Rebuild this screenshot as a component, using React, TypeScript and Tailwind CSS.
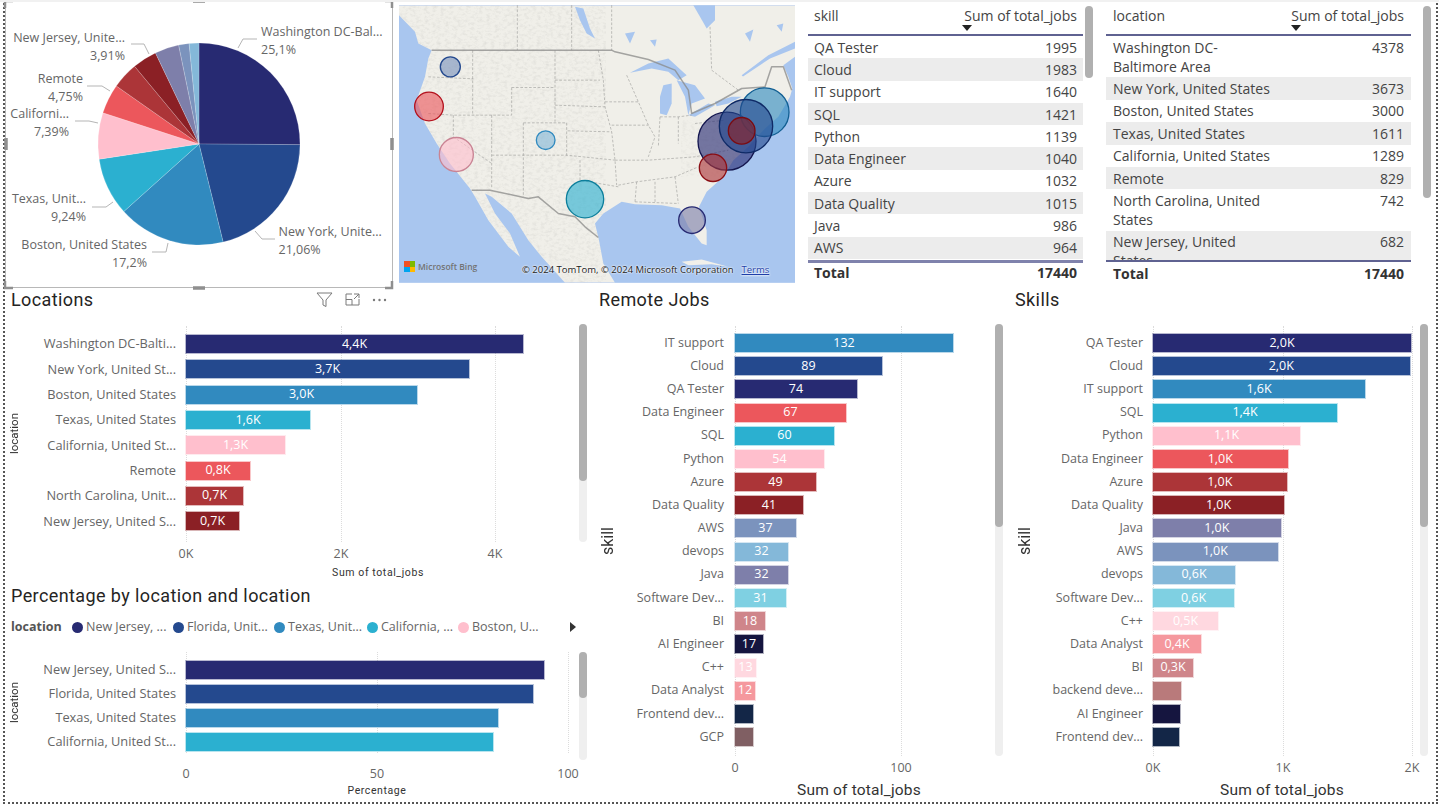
import type { ReactNode } from "react";

const C = {
  navy: "#272a72",
  blue: "#24498e",
  mid: "#318abf",
  teal: "#2bb0d0",
  pink: "#ffbfcd",
  coral: "#ec575c",
  red: "#ac3538",
  dark: "#8b2025",
  purple: "#7e7faa",
  steel: "#7b93bd",
  light: "#84b8d9",
  sky: "#7fd0e2",
  rose: "#cf858a",
  ink: "#15153f",
  blush: "#ffd8e0",
  salmon: "#f5989e",
  deep: "#132647",
  gcp: "#805f63",
  backend: "#b97a7b",
};

type Row = { label: string; value: number; color: string; text?: string };

const locationRows: Row[] = [
  { label: "Washington DC-Balti...", value: 337, color: C.navy, text: "4,4K" },
  { label: "New York, United St...", value: 283, color: C.blue, text: "3,7K" },
  { label: "Boston, United States", value: 231, color: C.mid, text: "3,0K" },
  { label: "Texas, United States", value: 124, color: C.teal, text: "1,6K" },
  { label: "California, United St...", value: 99, color: C.pink, text: "1,3K" },
  { label: "Remote", value: 64, color: C.coral, text: "0,8K" },
  { label: "North Carolina, Unit...", value: 57, color: C.red, text: "0,7K" },
  { label: "New Jersey, United S...", value: 53, color: C.dark, text: "0,7K" },
];

const percentRows: Row[] = [
  { label: "New Jersey, United S...", value: 358, color: C.navy },
  { label: "Florida, United States", value: 347, color: C.blue },
  { label: "Texas, United States", value: 312, color: C.mid },
  { label: "California, United St...", value: 307, color: C.teal },
];

const remoteRows: Row[] = [
  { label: "IT support", value: 218, color: C.mid, text: "132" },
  { label: "Cloud", value: 147, color: C.blue, text: "89" },
  { label: "QA Tester", value: 122, color: C.navy, text: "74" },
  { label: "Data Engineer", value: 111, color: C.coral, text: "67" },
  { label: "SQL", value: 99, color: C.teal, text: "60" },
  { label: "Python", value: 89, color: C.pink, text: "54" },
  { label: "Azure", value: 81, color: C.red, text: "49" },
  { label: "Data Quality", value: 68, color: C.dark, text: "41" },
  { label: "AWS", value: 61, color: C.steel, text: "37" },
  { label: "devops", value: 53, color: C.light, text: "32" },
  { label: "Java", value: 53, color: C.purple, text: "32" },
  { label: "Software Dev...", value: 51, color: C.sky, text: "31" },
  { label: "BI", value: 30, color: C.rose, text: "18" },
  { label: "AI Engineer", value: 28, color: C.ink, text: "17" },
  { label: "C++", value: 21, color: C.blush, text: "13" },
  { label: "Data Analyst", value: 20, color: C.salmon, text: "12" },
  { label: "Frontend dev...", value: 18, color: C.deep },
  { label: "GCP", value: 18, color: C.gcp },
];

const skillRows: Row[] = [
  { label: "QA Tester", value: 258, color: C.navy, text: "2,0K" },
  { label: "Cloud", value: 256.5, color: C.blue, text: "2,0K" },
  { label: "IT support", value: 212, color: C.mid, text: "1,6K" },
  { label: "SQL", value: 184, color: C.teal, text: "1,4K" },
  { label: "Python", value: 147, color: C.pink, text: "1,1K" },
  { label: "Data Engineer", value: 134.5, color: C.coral, text: "1,0K" },
  { label: "Azure", value: 133.5, color: C.red, text: "1,0K" },
  { label: "Data Quality", value: 131, color: C.dark, text: "1,0K" },
  { label: "Java", value: 127.5, color: C.purple, text: "1,0K" },
  { label: "AWS", value: 124.5, color: C.steel, text: "1,0K" },
  { label: "devops", value: 82, color: C.light, text: "0,6K" },
  { label: "Software Dev...", value: 81, color: C.sky, text: "0,6K" },
  { label: "C++", value: 65, color: C.blush, text: "0,5K" },
  { label: "Data Analyst", value: 48, color: C.salmon, text: "0,4K" },
  { label: "BI", value: 40, color: C.rose, text: "0,3K" },
  { label: "backend deve...", value: 28, color: C.backend },
  { label: "AI Engineer", value: 27, color: C.ink },
  { label: "Frontend dev...", value: 25.5, color: C.deep },
];

const skillTable = [
  ["QA Tester", "1995"],
  ["Cloud", "1983"],
  ["IT support", "1640"],
  ["SQL", "1421"],
  ["Python", "1139"],
  ["Data Engineer", "1040"],
  ["Azure", "1032"],
  ["Data Quality", "1015"],
  ["Java", "986"],
  ["AWS", "964"],
];

const locationTable = [
  ["Washington DC-Baltimore Area", "4378"],
  ["New York, United States", "3673"],
  ["Boston, United States", "3000"],
  ["Texas, United States", "1611"],
  ["California, United States", "1289"],
  ["Remote", "829"],
  ["North Carolina, United States", "742"],
  ["New Jersey, United States", "682"],
];

const pieSlices = [
  [25.1, C.navy],
  [21.06, C.blue],
  [17.2, C.mid],
  [9.24, C.teal],
  [7.39, C.pink],
  [4.75, C.coral],
  [4.25, C.red],
  [3.91, C.dark],
  [3.87, C.purple],
  [1.67, C.steel],
  [1.56, C.light],
] as const;

const pieLabels = [
  { x: 261, y: 36, anchor: "start", name: "Washington DC-Bal...", pct: "25,1%", line: "238,48 243,39 257,39" },
  { x: 278.5, y: 236, anchor: "start", name: "New York, Unite...", pct: "21,06%", line: "255,231 262,239 275,239" },
  { x: 147, y: 249, anchor: "end", name: "Boston, United States", pct: "17,2%", line: "168,243 166,252 152,252" },
  { x: 86, y: 203, anchor: "end", name: "Texas, Unit...", pct: "9,24%", line: "113,202 106,207 92,207" },
  { x: 69, y: 118, anchor: "end", name: "Californi...", pct: "7,39%", line: "98,123 89,121 75,121" },
  { x: 83, y: 83, anchor: "end", name: "Remote", pct: "4,75%", line: "110,91 102,86 87,86" },
  { x: 125, y: 42, anchor: "end", name: "New Jersey, Unite...", pct: "3,91%", line: "149,54 144,44 131,44" },
];

function slicePath(start: number, pct: number) {
  const cx = 199;
  const cy = 144;
  const r = 101;
  const a0 = (start / 100) * Math.PI * 2;
  const a1 = ((start + pct) / 100) * Math.PI * 2;
  const large = pct > 50 ? 1 : 0;
  return `M${cx} ${cy}L${cx + r * Math.sin(a0)} ${cy - r * Math.cos(a0)}A${r} ${r} 0 ${large} 1 ${cx + r * Math.sin(a1)} ${cy - r * Math.cos(a1)}Z`;
}

function PieCard() {
  let acc = 0;
  return (
    <div className="w-[388px] h-[288px] border border-[#b8b8b8] border-t-0 shrink-0">
      <svg viewBox="6 0 386 287" className="w-[386px] h-[287px] overflow-visible block">
        {pieSlices.map(([pct, color]) => {
          const d = slicePath(acc, pct);
          acc += pct;
          return <path key={color} d={d} fill={color} stroke="#ffffff" strokeOpacity="0.35" strokeWidth="0.5" />;
        })}
        {pieLabels.map((l) => (
          <g key={l.name}>
            <polyline points={l.line} fill="none" stroke="#b5b5b5" strokeWidth="1" />
            <text x={l.x} y={l.y} textAnchor={l.anchor as "start" | "end"} fontSize="12.5" fill="#666666">
              {l.name}
            </text>
            <text x={l.x} y={l.y + 18} textAnchor={l.anchor as "start" | "end"} fontSize="12.5" fill="#666666">
              {l.pct}
            </text>
          </g>
        ))}
        {/* selection handles */}
        <g fill="none" stroke="#8f8f8f" strokeWidth="2.5">
          <path d="M5 8V1H13M385 1H392V8M5 281V288H13M385 288H392V281" />
          <path d="M193 1H205M193 288H205M6 138V150M392 138V150" strokeWidth="3.5" />
        </g>
      </svg>
    </div>
  );
}

function UsMap() {
  const bubbles = [
    [166, 200, 30, C.steel, C.blue],
    [102, 319, 43, C.coral, "#b3101c"],
    [184, 463, 51, C.pink, "#c98494"],
    [452, 420, 28, C.light, C.mid],
    [570, 597, 56, C.teal, "#0d7f9c"],
    [891, 660, 40, C.purple, C.navy],
    [996, 423, 87, C.navy, "#14164f"],
    [1109, 336, 73, C.mid, "#125f93"],
    [1053, 378, 80, C.blue, "#0f2a66"],
    [954, 503, 41, C.red, "#8b0e14"],
    [1040, 392, 40, C.dark, "#7a0c12"],
  ] as const;
  const borders = [
    "M233 150V340",
    "M100 230L235 236",
    "M100 340L175 345H350",
    "M175 345V410L290 490",
    "M290 345V565",
    "M385 368V590",
    "M350 262H480M350 262V345",
    "M385 368H515V470",
    "M290 465H515L660 480",
    "M480 150V365",
    "M480 240H615M480 315L630 320M518 392L650 395",
    "M610 150L625 240L630 320L650 395L660 480L665 555",
    "M555 480V540L670 560",
    "M630 305H730M650 375H760",
    "M695 225L730 305L760 375L780 410L760 470",
    "M660 480H760L900 470L1000 450",
    "M725 545L720 605M780 545V605M840 530L850 610",
    "M720 605L850 610",
    "M670 555L725 545L840 530L910 500",
    "M850 350V430M795 350L790 440M795 350H850L890 345M900 370L990 360",
    "M367 15V150M530 15V150M650 15V150M945 80L950 210L1030 270",
  ];
  return (
    <div className="relative w-[396px] h-[278px] ml-[6px] mt-[5px] shrink-0 overflow-hidden">
      <svg viewBox="12 15 1188 833" className="w-full h-full block">
        <defs>
          <filter id="terrain" x="0" y="0" width="100%" height="100%">
            <feTurbulence type="fractalNoise" baseFrequency="0.08 0.12" numOctaves="3" seed="4" />
            <feColorMatrix values="0 0 0 0 0.55 0 0 0 0 0.55 0 0 0 0 0.52 0 0 0 1.6 -0.72" />
          </filter>
          <clipPath id="land">
            <path d="M12 15H1200V170L1165 195L1180 230L1192 265L1185 290L1150 350L1110 385L1060 440L1015 480L985 530L935 575L912 620L935 690L935 735L920 730L880 680L855 625L800 615L720 612L680 605L625 640L600 670L612 720L625 790L660 848H510L440 770L400 720L350 640L290 590L270 580L300 640L345 700L375 770L340 740L280 660L240 590L225 565L165 490L125 430L90 370L65 300L90 230L100 175L110 150L70 130L60 95L12 45Z" />
          </clipPath>
        </defs>
        <rect x="12" y="15" width="1188" height="833" fill="#a9c6ef" />
        <g clipPath="url(#land)">
          <rect x="12" y="15" width="1188" height="833" fill="#f0efe9" />
          <rect x="12" y="15" width="620" height="833" filter="url(#terrain)" opacity="0.45" />
          <rect x="860" y="360" width="170" height="170" filter="url(#terrain)" opacity="0.3" />
        </g>
        <path d="M860 785L920 778L1000 800L950 792L880 795Z" fill="#f1f0ea" />
        <g fill="#a9c6ef">
          <path d="M705 218L760 190L820 175L875 225L850 240L820 215L770 205Z" />
          <path d="M805 255L830 250L830 310L815 345L795 340L795 290Z" />
          <path d="M845 240L900 255L930 295L890 310L880 345L870 290Z" />
          <path d="M880 345L940 310L960 315L900 350Z" />
          <path d="M960 305L1010 290L1040 290L1000 310L965 318Z" />
          <path d="M540 20L565 25L585 85L600 115L575 100L555 60Z" />
          <path d="M895 15H960V60L935 85L915 50Z" />
          <path d="M690 100L720 95L705 130ZM765 120L785 118L780 140Z" />
          <path d="M1050 100L1075 88L1065 125ZM1145 75L1165 70L1160 95Z" />
          <path d="M1200 125L1120 165L1040 225L1044 229L1125 175L1200 145Z" />
        </g>
        <g fill="none" stroke="#a3a3a0" strokeWidth="2" strokeDasharray="8 5">
          {borders.map((d) => (
            <path key={d} d={d} />
          ))}
        </g>
        <g fill="none" stroke="#8a8a88" strokeWidth="4.5" strokeOpacity="0.75" strokeLinejoin="round">
          <path d="M110 150H650L660 155L760 178L840 210L880 270L890 340L960 310L1040 265L1110 260L1130 200L1165 200L1190 270" />
          <path d="M230 570H285L400 595L430 590L490 640L540 650L570 680L610 712" />
        </g>
        {bubbles.map(([cx, cy, r, fill, stroke]) => (
          <circle key={`${cx}-${cy}`} cx={cx} cy={cy} r={r} fill={fill} fillOpacity="0.62" stroke={stroke} strokeWidth="4" />
        ))}
      </svg>
      <div className="absolute left-[5px] top-[256px] flex items-center gap-[3px]">
        <span className="grid grid-cols-2 w-[11px] h-[11px]">
          <i className="bg-[#f25022]" />
          <i className="bg-[#7fba00]" />
          <i className="bg-[#00a4ef]" />
          <i className="bg-[#ffb900]" />
        </span>
        <span className="text-[8.5px] leading-[11px] font-semibold text-[#737373]">Microsoft Bing</span>
      </div>
      <div className="absolute left-[123px] top-[258px] flex text-[9.5px] leading-[14px] text-[#222] whitespace-nowrap [text-shadow:0_0_2px_#fff,0_0_2px_#fff]">
        <span>© 2024 TomTom, © 2024 Microsoft Corporation</span>
        <span className="ml-[8px] underline text-[#1f3fa8]">Terms</span>
      </div>
    </div>
  );
}

function SortHeader({ name, caretClass }: { name: string; caretClass: string }) {
  return (
    <div className="relative h-[34px] flex items-start justify-between pt-[6px] text-[14px] leading-[20px] text-[#444]">
      <span>{name}</span>
      <span>Sum of total_jobs</span>
      <span className={`absolute top-[25px] w-0 h-0 border-x-[5px] border-x-transparent border-t-[6px] border-t-[#222] ${caretClass}`} />
    </div>
  );
}

function TableScroll({ thumbClass }: { thumbClass: string }) {
  return <div className={`absolute top-[6px] w-[8px] rounded bg-[#b0b0b0] ${thumbClass}`} />;
}

function SkillTable() {
  return (
    <div className="relative ml-[13px] w-[298px] shrink-0">
      <div className="w-[275px]">
        <div className="px-[6px]">
          <SortHeader name="skill" caretClass="left-[148px]" />
        </div>
        <div className="border-t-2 border-[#5f6291] h-[226px] overflow-hidden">
          {skillTable.map(([name, value], i) => (
            <div
              key={name}
              className={`h-[22.3px] flex items-center justify-between px-[6px] text-[14px] text-[#444] ${i % 2 ? "bg-[#ececec]" : ""}`}
            >
              <span>{name}</span>
              <span>{value}</span>
            </div>
          ))}
        </div>
        <div className="border-t-[3px] border-[#7f82ac] h-[22px] flex items-center justify-between px-[6px] text-[14px] font-bold text-[#333]">
          <span>Total</span>
          <span>17440</span>
        </div>
      </div>
      <TableScroll thumbClass="left-[277px] h-[72px]" />
    </div>
  );
}

function LocationTable() {
  return (
    <div className="relative w-[325px] shrink-0">
      <div className="w-[305px]">
        <div className="px-[7px]">
          <SortHeader name="location" caretClass="left-[178px]" />
        </div>
        <div className="border-t-2 border-[#5f6291] h-[226px] overflow-hidden">
          {locationTable.map(([name, value], i) => (
            <div
              key={name}
              className={`min-h-[22.4px] flex items-start justify-between px-[7px] py-[1.7px] text-[14px] leading-[19px] text-[#444] ${i % 2 ? "bg-[#ececec]" : ""}`}
            >
              <span className="w-[165px]">{name}</span>
              <span>{value}</span>
            </div>
          ))}
        </div>
        <div className="border-t-2 border-[#5f6291] h-[24px] pt-[1px] flex items-center justify-between px-[7px] text-[14px] font-bold text-[#333]">
          <span>Total</span>
          <span>17440</span>
        </div>
      </div>
      <TableScroll thumbClass="left-[317px] h-[192px]" />
    </div>
  );
}

function ChartIcons() {
  return (
    <div className="flex items-center ml-auto mr-[6px] gap-[12px] text-[#7a7a7a]">
      <svg width="17" height="16" viewBox="0 0 17 16" fill="none" stroke="currentColor" strokeWidth="1">
        <path d="M1 1H16L10 8V14.5L7 13V8Z" />
      </svg>
      <svg width="15" height="13" viewBox="0 0 15 13" fill="none" stroke="currentColor" strokeWidth="1">
        <path d="M7 1H1V12H14V6M1 6.5H7V12M9 1H14V5M14 1L9 6" />
      </svg>
      <svg width="15" height="4" viewBox="0 0 15 4" fill="currentColor">
        <circle cx="2" cy="2" r="1.2" />
        <circle cx="7.5" cy="2" r="1.2" />
        <circle cx="13" cy="2" r="1.2" />
      </svg>
    </div>
  );
}

type ChartProps = {
  title: string;
  titleClass: string;
  extras?: ReactNode;
  legend?: ReactNode;
  rows: Row[];
  pitch: number;
  rowsTop: string;
  axisName: string;
  axisColClass: string;
  axisNameClass: string;
  labelClass: string;
  rowsWidthClass: string;
  ticks: { label: string; x: number }[];
  gridHeightClass: string;
  scrollTrackClass: string;
  scrollThumbClass: string;
  footName: string;
  footClass: string;
  tickRowClass: string;
};

function BarChart(p: ChartProps) {
  return (
    <div>
      <div className={`h-[23px] flex items-center font-['Roboto',sans-serif] text-[18px] tracking-[0.4px] text-[#252423] ${p.titleClass}`}>
        <span>{p.title}</span>
        {p.extras}
      </div>
      {p.legend}
      <div className="flex mt-[15px]">
        <div className={`flex items-center justify-center shrink-0 ${p.axisColClass}`}>
          <span className={`[writing-mode:vertical-rl] rotate-180 leading-none font-['Roboto',sans-serif] text-[#333] ${p.axisNameClass}`}>{p.axisName}</span>
        </div>
        <div className={`shrink-0 ${p.rowsWidthClass}`}>
          <div className={`relative ${p.rowsTop} ${p.gridHeightClass}`}>
            {p.ticks.map((t) => (
              <div
                key={t.label}
                className="absolute top-0 bottom-0 border-l border-dotted border-[#dcdcdc]"
                style={{ left: t.x }}
              />
            ))}
            {p.rows.map((r) => (
              <div key={r.label} className="relative flex items-center" style={{ height: p.pitch }}>
                <span className={`text-right whitespace-nowrap text-[#666] shrink-0 box-content ${p.labelClass}`}>{r.label}</span>
                <div
                  className="h-[18px] flex items-center justify-center text-[12.5px] text-white"
                  style={{ width: r.value, backgroundColor: r.color, boxShadow: `0 0 0 1px ${r.color}55` }}
                >
                  {r.text}
                </div>
              </div>
            ))}
          </div>
          <div className={`relative ${p.tickRowClass}`}>
            {p.ticks.map((t) => (
              <span
                key={t.label}
                className="absolute top-0 -translate-x-1/2 text-[12.5px] leading-[18px] text-[#666]"
                style={{ left: t.x }}
              >
                {t.label}
              </span>
            ))}
          </div>
          <div className={`text-center font-['Roboto',sans-serif] ${p.footClass}`}>{p.footName}</div>
        </div>
        <div className={`w-[8px] rounded bg-[#efefef] shrink-0 ${p.scrollTrackClass}`}>
          <div className={`rounded bg-[#b0b0b0] ${p.scrollThumbClass}`} />
        </div>
      </div>
    </div>
  );
}

function Legend() {
  const items = [
    ["New Jersey, ...", C.navy, "w-[101px]"],
    ["Florida, Unit...", C.blue, "w-[101px]"],
    ["Texas, Unit...", C.mid, "w-[93px]"],
    ["California, ...", C.teal, "w-[91px]"],
    ["Boston, U...", C.pink, "w-[112px]"],
  ];
  return (
    <div className="flex items-center h-[20px] mt-[10px] pl-[6px] text-[12.5px] text-[#666] whitespace-nowrap">
      <span className="w-[61px] font-bold text-[#555]">location</span>
      {items.map(([name, color, w]) => (
        <span key={name} className={`flex items-center gap-[3px] ${w}`}>
          <i className="w-[11px] h-[11px] rounded-full" style={{ backgroundColor: color }} />
          {name}
        </span>
      ))}
      <span className="w-0 h-0 border-y-[5px] border-y-transparent border-l-[6px] border-l-[#333]" />
    </div>
  );
}

export default function App() {
  return (
    <div className="relative w-[1439px] h-[807px] pl-[3px] pr-[1px] pb-[3px] bg-white overflow-hidden font-['Open_Sans',sans-serif]">
      <div className="absolute top-0 left-0 right-0 h-[2px] bg-[#f1f1f1]" />
      <div className="h-full border-x-2 border-b-2 border-dotted border-[#555] flex flex-col">
        {/* top row */}
        <div className="flex h-[288px] shrink-0">
          <PieCard />
          <UsMap />
          <SkillTable />
          <LocationTable />
        </div>

        {/* bottom row */}
        <div className="flex flex-1">
          <div className="w-[586px] shrink-0">
            <div className="h-[296px]">
              <BarChart
                title="Locations"
                titleClass="pl-[6px] w-[388px]"
                extras={<ChartIcons />}
                rows={locationRows}
                pitch={25.3}
                rowsTop="pt-[5.4px]"
                axisName="location"
                axisColClass="w-[20px] h-[216px]"
                axisNameClass="text-[11.5px]"
                labelClass="w-[151px] pr-[10px] text-[12.8px]"
                rowsWidthClass="w-[554px]"
                ticks={[
                  { label: "0K", x: 161 },
                  { label: "2K", x: 316 },
                  { label: "4K", x: 470 },
                ]}
                gridHeightClass="h-[216px]"
                scrollTrackClass="h-[218px] -mt-[2px]"
                scrollThumbClass="h-[157px]"
                footName="Sum of total_jobs"
                footClass="w-[706px] text-[10.5px] tracking-[0.6px] leading-[14px] text-[#333]"
                tickRowClass="h-[21px] mt-[3px]"
              />
            </div>
            <BarChart
              title="Percentage by location and location"
              titleClass="pl-[6px]"
              legend={<Legend />}
              rows={percentRows}
              pitch={24}
              rowsTop="pt-[6px]"
              axisName="location"
              axisColClass="w-[20px] h-[101px]"
              axisNameClass="text-[11.5px]"
              labelClass="w-[151px] pr-[10px] text-[12.8px]"
              rowsWidthClass="w-[554px]"
              ticks={[
                { label: "0", x: 161 },
                { label: "50", x: 352 },
                { label: "100", x: 543 },
              ]}
              gridHeightClass="h-[101px]"
              scrollTrackClass="h-[108px]"
              scrollThumbClass="h-[46px]"
              footName="Percentage"
              footClass="w-[704px] text-[10.5px] tracking-[0.6px] leading-[14px] text-[#333]"
              tickRowClass="h-[19px] mt-[12px]"
            />
          </div>

          <div className="w-[416px] shrink-0">
            <BarChart
              title="Remote Jobs"
              titleClass="pl-[8px]"
              rows={remoteRows}
              pitch={23.2}
              rowsTop="pt-[5.4px]"
              axisName="skill"
              axisColClass="w-[34px] h-[430px]"
              axisNameClass="text-[16px]"
              labelClass="w-[99px] pr-[11px] text-[12.5px]"
              rowsWidthClass="w-[370px]"
              ticks={[
                { label: "0", x: 110 },
                { label: "100", x: 276 },
              ]}
              gridHeightClass="h-[430px]"
              scrollTrackClass="h-[432px] -mt-[2px]"
              scrollThumbClass="h-[203px]"
              footName="Sum of total_jobs"
              footClass="w-[468px] text-[15.5px] leading-[20px] tracking-[0.2px] text-[#333]"
              tickRowClass="h-[21px] mt-[3px]"
            />
          </div>

          <div className="w-[429px] shrink-0">
            <BarChart
              title="Skills"
              titleClass="pl-[8px]"
              rows={skillRows}
              pitch={23.2}
              rowsTop="pt-[5.4px]"
              axisName="skill"
              axisColClass="w-[36px] h-[430px]"
              axisNameClass="text-[16px]"
              labelClass="w-[100px] pr-[10px] text-[12.5px]"
              rowsWidthClass="w-[377px]"
              ticks={[
                { label: "0K", x: 110 },
                { label: "1K", x: 240 },
                { label: "2K", x: 369 },
              ]}
              gridHeightClass="h-[430px]"
              scrollTrackClass="h-[432px] -mt-[2px]"
              scrollThumbClass="h-[203px]"
              footName="Sum of total_jobs"
              footClass="w-[478px] text-[15.5px] leading-[20px] tracking-[0.2px] text-[#333]"
              tickRowClass="h-[21px] mt-[3px]"
            />
          </div>
        </div>
      </div>
    </div>
  );
}
